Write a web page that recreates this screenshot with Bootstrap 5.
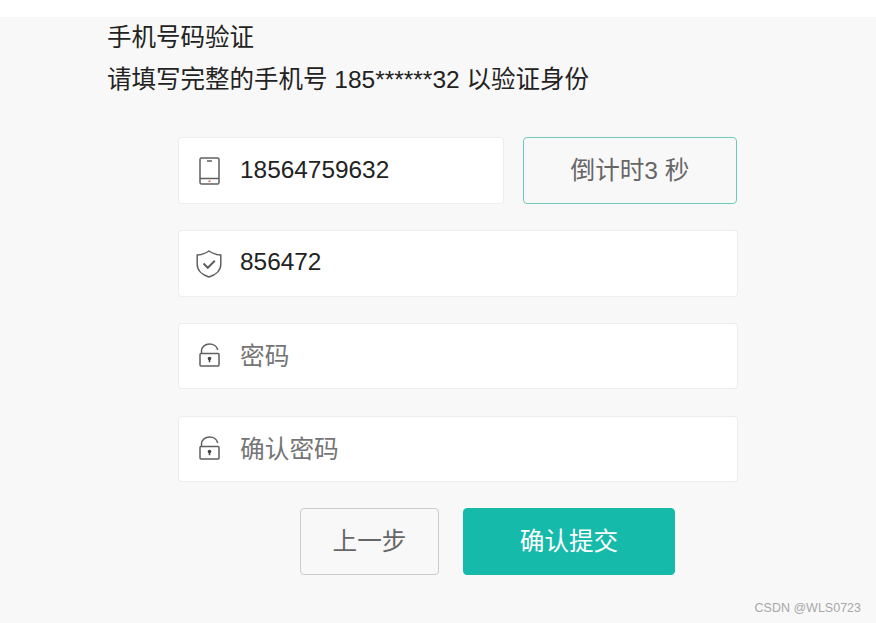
<!DOCTYPE html>
<html lang="zh-CN">
<head>
    <meta charset="UTF-8">
    <meta name="viewport" content="width=device-width, initial-scale=1.0">
    <title>手机号码验证</title>
    <link href="https://cdn.jsdelivr.net/npm/bootstrap@5.3.0/dist/css/bootstrap.min.css" rel="stylesheet">
    <style>
        html, body {
            height: 100%;
        }
        body {
            background: #fff;
            font-family: "Liberation Sans", "Noto Sans CJK SC", sans-serif;
            font-size: 24.5px;
            padding-top: 17px;
            overflow: hidden;
        }
        .verify-page {
            position: relative;
            height: 606px;
            background: #f8f8f8;
        }
        .verify-head {
            padding-left: 107px;
            line-height: 42px;
            color: #222;
        }
        .verify-form {
            width: 560px;
            margin: 36px 0 0 178px;
            gap: 26px;
        }
        .field-box {
            height: 67px;
        }
        .field-short {
            height: 66px;
        }
        .field-spaced {
            margin-bottom: 1px;
        }
        .field-box .input-group-text {
            width: 62px;
            padding: 0 1px 0 0;
            justify-content: center;
            background: #fff;
            border-color: #ededed;
            border-right: 0;
            border-radius: 4px 0 0 4px;
        }
        .field-short .input-group-text {
            padding-bottom: 2px;
        }
        .field-box .form-control {
            padding: 0 0 0 1px;
            font-size: 24.4px;
            color: #222;
            border-color: #ededed;
            border-left: 0;
            border-radius: 0 4px 4px 0;
            box-shadow: none;
        }
        .field-box.field-short .form-control {
            padding-top: 2px;
        }
        .field-box.code-field .form-control {
            padding-bottom: 2px;
        }
        .field-box .form-control::placeholder {
            font-size: 24.7px;
            color: #757575;
            opacity: 1;
        }
        .phone-row {
            gap: 19px;
        }
        .phone-field {
            width: 326px;
            flex: none;
        }
        .btn-count, .btn-prev, .btn-submit {
            font-size: 24.6px;
            border-radius: 4px;
            padding: 1px 0 0;
        }
        .btn-count {
            width: 214px;
            color: #666;
            background: transparent;
            border: 1px solid #6fcabd;
        }
        .action-row {
            padding-left: 122px;
            gap: 24px;
        }
        .btn-prev, .btn-submit {
            height: 67px;
        }
        .btn-prev {
            width: 139px;
            color: #666;
            background: transparent;
            border: 1px solid #ccc;
        }
        .btn-submit {
            width: 212px;
            color: #fff;
            background: #16baaa;
            border: 1px solid #16baaa;
        }
        .watermark {
            position: absolute;
            right: 15px;
            bottom: 7px;
            font-size: 12.5px;
            line-height: 16px;
            color: #a8a8a8;
        }
    </style>
</head>
<body>
    <div class="verify-page">
        <div class="verify-head">
            <div>手机号码验证</div>
            <div>请填写完整的手机号 185******32 以验证身份</div>
        </div>

        <form class="verify-form d-flex flex-column">
            <div class="phone-row d-flex">
                <div class="input-group field-box phone-field">
                    <span class="input-group-text">
                        <svg width="21" height="28" viewBox="0 0 21 28" fill="none" stroke="#5f5f5f" stroke-width="1.5">
                            <rect x="1" y="1" width="19" height="26" rx="1.6"/>
                            <path d="M1 21.5h19M8 4h5"/>
                            <path d="M9.5 24.3h2" stroke="#b5654a"/>
                        </svg>
                    </span>
                    <input type="text" class="form-control" value="18564759632">
                </div>
                <button type="button" class="btn btn-count">倒计时3 秒</button>
            </div>

            <div class="input-group field-box code-field">
                <span class="input-group-text">
                    <svg width="26" height="28" viewBox="0 0 26 28" fill="none" stroke="#5f5f5f" stroke-width="1.5">
                        <path d="M13 1 C10 3.2 6 4.6 1.2 5 V14.5 C1.2 20.5 6.5 25 13 27 C19.5 25 24.8 20.5 24.8 14.5 V5 C20 4.6 16 3.2 13 1 Z"/>
                        <path d="M7.5 13.5 L11.8 17.8 L18.8 10.8" stroke-width="2"/>
                    </svg>
                </span>
                <input type="text" class="form-control" value="856472">
            </div>

            <div class="input-group field-box field-short field-spaced">
                <span class="input-group-text">
                    <svg width="21" height="24" viewBox="0 0 21 24" fill="none" stroke="#5f5f5f" stroke-width="1.5">
                        <rect x="1" y="10.5" width="19" height="12.5" rx="1"/>
                        <path d="M2.5 10.5 V8 C2.5 3.5 6.5 1 10.5 1 C14.5 1 18 3.4 18.7 7"/>
                        <circle cx="10.5" cy="15.6" r="1.8" fill="#444" stroke="none"/>
                        <path d="M10.5 16v3.2" stroke-width="1.6" stroke="#444"/>
                    </svg>
                </span>
                <input type="password" class="form-control" placeholder="密码">
            </div>

            <div class="input-group field-box field-short">
                <span class="input-group-text">
                    <svg width="21" height="24" viewBox="0 0 21 24" fill="none" stroke="#5f5f5f" stroke-width="1.5">
                        <rect x="1" y="10.5" width="19" height="12.5" rx="1"/>
                        <path d="M2.5 10.5 V8 C2.5 3.5 6.5 1 10.5 1 C14.5 1 18 3.4 18.7 7"/>
                        <circle cx="10.5" cy="15.6" r="1.8" fill="#444" stroke="none"/>
                        <path d="M10.5 16v3.2" stroke-width="1.6" stroke="#444"/>
                    </svg>
                </span>
                <input type="password" class="form-control" placeholder="确认密码">
            </div>

            <div class="action-row d-flex">
                <button type="button" class="btn btn-prev">上一步</button>
                <button type="button" class="btn btn-submit">确认提交</button>
            </div>
        </form>

        <div class="watermark">CSDN @WLS0723</div>
    </div>

    <script src="https://cdn.jsdelivr.net/npm/bootstrap@5.3.0/dist/js/bootstrap.bundle.min.js"></script>
</body>
</html>
